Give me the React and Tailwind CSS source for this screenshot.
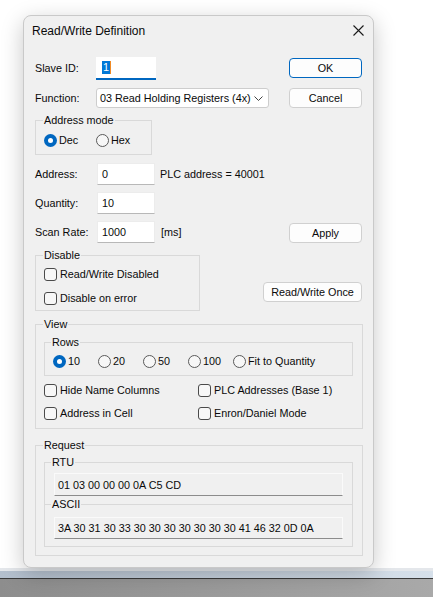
const Radio = ({ checked, label, className = "" }) => (
  <div className={`flex items-center h-[14px] ${className}`}>
    {checked ? (
      <span className="w-[13px] h-[13px] rounded-full bg-[#0067c0] flex items-center justify-center shrink-0">
        <span className="w-[5px] h-[5px] rounded-full bg-white" />
      </span>
    ) : (
      <span className="w-[13px] h-[13px] rounded-full border border-[#5a5a5a] bg-[#f7f7f7] shrink-0" />
    )}
    <span className="ml-[2px]">{label}</span>
  </div>
);

const Check = ({ label }) => (
  <div className="flex items-center h-[14px]">
    <span className="w-[13px] h-[13px] rounded-[3px] border border-[#4a4a4a] bg-[#f7f7f7] shrink-0" />
    <span className="ml-[3px]">{label}</span>
  </div>
);

const Field = ({ label, value, extra, extraClass = "" }) => (
  <div className="flex items-center h-[22px]">
    <span className="w-[62px]">{label}</span>
    <div className="w-[58px] h-[22px] bg-white border border-[#ececec] border-b-[#b8b8b8] flex items-center pl-[4px]">
      {value}
    </div>
    {extra && <span className={extraClass}>{extra}</span>}
  </div>
);

export default function App() {
  return (
    <div className="w-[433px] h-[597px] overflow-hidden bg-white flex flex-col font-['Liberation_Sans',Arial,sans-serif] text-[10.8px] leading-[14px] text-[#0a0a0a]">
      <div className="h-[568px] shrink-0 pt-[15px] pl-[23px]">
        <div className="relative z-10 w-[351px] h-[553px] bg-[#f0f0f0] border border-[#c9c9c9] rounded-[8px] shadow-[0_6px_22px_rgba(0,0,0,0.22)] flex flex-col">
          {/* Title bar */}
          <div className="h-[30px] shrink-0 flex items-center justify-between pl-[8px] pr-[9px]">
            <span className="text-[12px] leading-[16px]">Read/Write Definition</span>
            <svg width="11" height="11" viewBox="0 0 11 11" className="mb-[1px]">
              <path d="M0.5 0.5 L10.5 10.5 M10.5 0.5 L0.5 10.5" stroke="#1a1a1a" strokeWidth="1.1" fill="none" />
            </svg>
          </div>

          <div className="pl-[11px] pr-[11px] flex flex-col">
            {/* Slave ID / OK */}
            <div className="mt-[11px] h-[22px] flex items-center">
              <span className="w-[61px]">Slave ID:</span>
              <div className="w-[60px] h-[23px] bg-white border-b-2 border-[#0067c0] flex items-center pl-[6px]">
                <span className="bg-[#0078d7] text-white px-[1px] leading-[13px]">1</span>
                <span className="w-[1px] h-[13px] bg-[#f08a24]" />
              </div>
              <div className="flex-1" />
              <div className="w-[73px] h-[20px] flex items-center justify-center bg-[#fdfdfd] border border-[#0067c0] rounded-[4px]">OK</div>
            </div>

            {/* Function / Cancel */}
            <div className="mt-[9px] h-[20px] flex items-center">
              <span className="w-[61px]">Function:</span>
              <div className="w-[173px] h-[20px] bg-white border border-[#cdcdcd] rounded-[3px] flex items-center justify-between pl-[3px] pr-[5px]">
                <span>03 Read Holding Registers (4x)</span>
                <svg width="9" height="5" viewBox="0 0 9 5">
                  <path d="M0.5 0.5 L4.5 4.5 L8.5 0.5" stroke="#444" strokeWidth="1" fill="none" />
                </svg>
              </div>
              <div className="flex-1" />
              <div className="w-[73px] h-[20px] flex items-center justify-center bg-[#fdfdfd] border border-[#d0d0d0] rounded-[4px]">Cancel</div>
            </div>

            {/* Address mode */}
            <fieldset className="mt-[6px] w-[117px] h-[41px] border border-[#d9d9d9]">
              <legend className="ml-[7px] px-[1px] leading-[12px]">Address mode</legend>
              <div className="pt-[7px] pl-[8px] flex">
                <Radio checked label="Dec" className="w-[52px]" />
                <Radio label="Hex" />
              </div>
            </fieldset>

            <div className="mt-[8px]">
              <Field label="Address:" value="0" extra="PLC address = 40001" extraClass="ml-[5px]" />
            </div>
            <div className="mt-[7px]">
              <Field label="Quantity:" value="10" />
            </div>
            <div className="mt-[7px] flex items-end justify-between">
              <Field label="Scan Rate:" value="1000" extra="[ms]" extraClass="ml-[6px]" />
              <div className="w-[73px] h-[20px] flex items-center justify-center bg-[#fdfdfd] border border-[#d0d0d0] rounded-[4px]">Apply</div>
            </div>

            {/* Disable */}
            <div className="mt-[6px] flex items-start justify-between">
              <fieldset className="w-[165px] h-[62px] border border-[#d9d9d9]">
                <legend className="ml-[7px] px-[1px] leading-[12px]">Disable</legend>
                <div className="pt-[6px] pl-[8px] flex flex-col gap-[10px]">
                  <Check label="Read/Write Disabled" />
                  <Check label="Disable on error" />
                </div>
              </fieldset>
              <div className="mt-[33px] w-[99px] h-[20px] flex items-center justify-center bg-[#fdfdfd] border border-[#d0d0d0] rounded-[4px]">Read/Write Once</div>
            </div>

            {/* View */}
            <fieldset className="mt-[7px] w-[328px] h-[111px] border border-[#d9d9d9]">
              <legend className="ml-[7px] px-[1px] leading-[12px]">View</legend>
              <fieldset className="mt-[6px] ml-[8px] w-[309px] h-[40px] border border-[#d9d9d9]">
                <legend className="ml-[6px] px-[1px] leading-[12px]">Rows</legend>
                <div className="pt-[6px] pl-[8px] flex">
                  <Radio checked label="10" className="w-[45px]" />
                  <Radio label="20" className="w-[45px]" />
                  <Radio label="50" className="w-[45px]" />
                  <Radio label="100" className="w-[45px]" />
                  <Radio label="Fit to Quantity" />
                </div>
              </fieldset>
              <div className="pl-[8px] mt-[7px] grid grid-cols-[154px_1fr] gap-y-[9px]">
                <Check label="Hide Name Columns" />
                <Check label="PLC Addresses (Base 1)" />
                <Check label="Address in Cell" />
                <Check label="Enron/Daniel Mode" />
              </div>
            </fieldset>

            {/* Request */}
            <fieldset className="mt-[10px] w-[328px] h-[117px] border border-[#d9d9d9]">
              <legend className="ml-[7px] px-[1px] leading-[12px]">Request</legend>
              <fieldset className="mt-[5px] ml-[8px] w-[309px] h-[91px] border border-[#d9d9d9]">
                <legend className="ml-[6px] px-[1px] leading-[12px]">RTU</legend>
                <div className="mt-[5px] ml-[9px] w-[289px] h-[23px] bg-[#f0f0f0] border border-[#fafafa] border-b-[#8c8c8c] flex items-center pl-[3px]">
                  01 03 00 00 00 0A C5 CD
                </div>
                <fieldset className="mt-[2px] border-t border-[#d9d9d9]">
                  <legend className="ml-[6px] px-[1px] leading-[12px]">ASCII</legend>
                  <div className="mt-[7px] ml-[9px] w-[289px] h-[22px] bg-[#f0f0f0] border border-[#fafafa] border-b-[#8c8c8c] flex items-center pl-[3px]">
                    3A 30 31 30 33 30 30 30 30 30 30 30 41 46 32 0D 0A
                  </div>
                </fieldset>
              </fieldset>
            </fieldset>
          </div>
        </div>
      </div>
      <div className="h-[3px] shrink-0 bg-[#e4e7eb]" />
      <div className="h-[7px] shrink-0 bg-gradient-to-r from-[#b3bfcd] to-[#d6e0ea]" />
      <div className="h-[1px] shrink-0 bg-[#3a3a3a]" />
      <div className="flex-1 bg-gradient-to-r from-[#8d8d8d] to-[#a9a9a9]" />
    </div>
  );
}
